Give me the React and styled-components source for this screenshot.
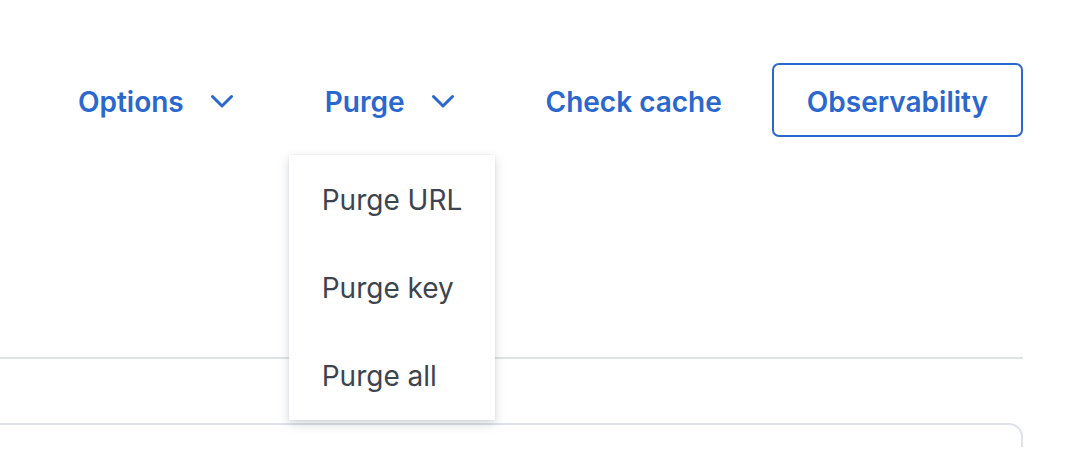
import React, { useState } from 'react';
import styled, { createGlobalStyle } from 'styled-components';

const GlobalStyle = createGlobalStyle`
    *, *::before, *::after {
        box-sizing: border-box;
    }
    html, body {
        margin: 0;
        padding: 0;
        background: #ffffff;
        font-family: Inter, 'Noto Sans', sans-serif;
        overflow: hidden;
    }
`;

const Page = styled.div`
    width: 1063px;
    margin-left: -40px;
    padding-top: 63px;
`;

const Toolbar = styled.div`
    display: flex;
    justify-content: flex-end;
    align-items: center;
    gap: 20px;
`;

const MenuWrap = styled.div`
    position: relative;
`;

const NavButton = styled.button`
    display: flex;
    align-items: center;
    gap: 27px;
    height: 74px;
    padding: 3px ${(props) => (props.outlined ? '33px' : '34px')} 0;
    margin-left: ${(props) => (props.outlined ? '-6px' : '0')};
    border: ${(props) => (props.outlined ? '2px solid #2a67cf' : '2px solid transparent')};
    border-radius: 7px;
    background: transparent;
    color: #2a67cf;
    font-family: Inter, sans-serif;
    font-size: 28px;
    font-weight: 600;
    white-space: nowrap;
    cursor: pointer;
`;

const Chevron = styled.svg`
    width: 22px;
    height: 14px;
    flex-shrink: 0;
    margin-top: -1px;
`;

const Dropdown = styled.ul`
    position: absolute;
    top: calc(100% + 18px);
    left: 0;
    width: 206px;
    margin: 0;
    padding: 1px 0 0;
    list-style: none;
    background: #ffffff;
    box-shadow: 0 4px 10px rgba(30, 40, 60, 0.18), 0 0 2px rgba(30, 40, 60, 0.08);
    z-index: 5;
`;

const DropdownItem = styled.li`
    height: 88px;
    display: flex;
    align-items: center;
    padding: 0 33px;
    color: #3d4450;
    font-size: 28px;
    font-weight: 400;
    white-space: nowrap;
    cursor: pointer;
`;

const Divider = styled.hr`
    margin: 220px 0 0;
    border: none;
    border-top: 2px solid #dfe3e8;
`;

const Card = styled.div`
    margin-top: 64px;
    height: 24px;
    border: 2px solid #dfe3e8;
    border-bottom: none;
    border-radius: 14px 14px 0 0;
`;

const ChevronIcon = () => (
    <Chevron viewBox="0 0 22 14" fill="none">
        <path d="M1.5 2.5L11 12L20.5 2.5" stroke="#2a67cf" strokeWidth="3" strokeLinecap="round" strokeLinejoin="round" />
    </Chevron>
);

const purgeItems = ['Purge URL', 'Purge key', 'Purge all'];

const App = () => {
    const [open, setOpen] = useState('purge');

    return (
        <>
            <GlobalStyle />
            <Page>
                <Toolbar>
                    <MenuWrap>
                        <NavButton onClick={() => setOpen(open === 'options' ? null : 'options')}>
                            Options
                            <ChevronIcon />
                        </NavButton>
                    </MenuWrap>
                    <MenuWrap>
                        <NavButton onClick={() => setOpen(open === 'purge' ? null : 'purge')}>
                            Purge
                            <ChevronIcon />
                        </NavButton>
                        {open === 'purge' && (
                            <Dropdown>
                                {purgeItems.map((item) => (
                                    <DropdownItem key={item}>{item}</DropdownItem>
                                ))}
                            </Dropdown>
                        )}
                    </MenuWrap>
                    <NavButton>Check cache</NavButton>
                    <NavButton outlined>Observability</NavButton>
                </Toolbar>
                <Divider />
                <Card />
            </Page>
        </>
    );
};

export default App;
